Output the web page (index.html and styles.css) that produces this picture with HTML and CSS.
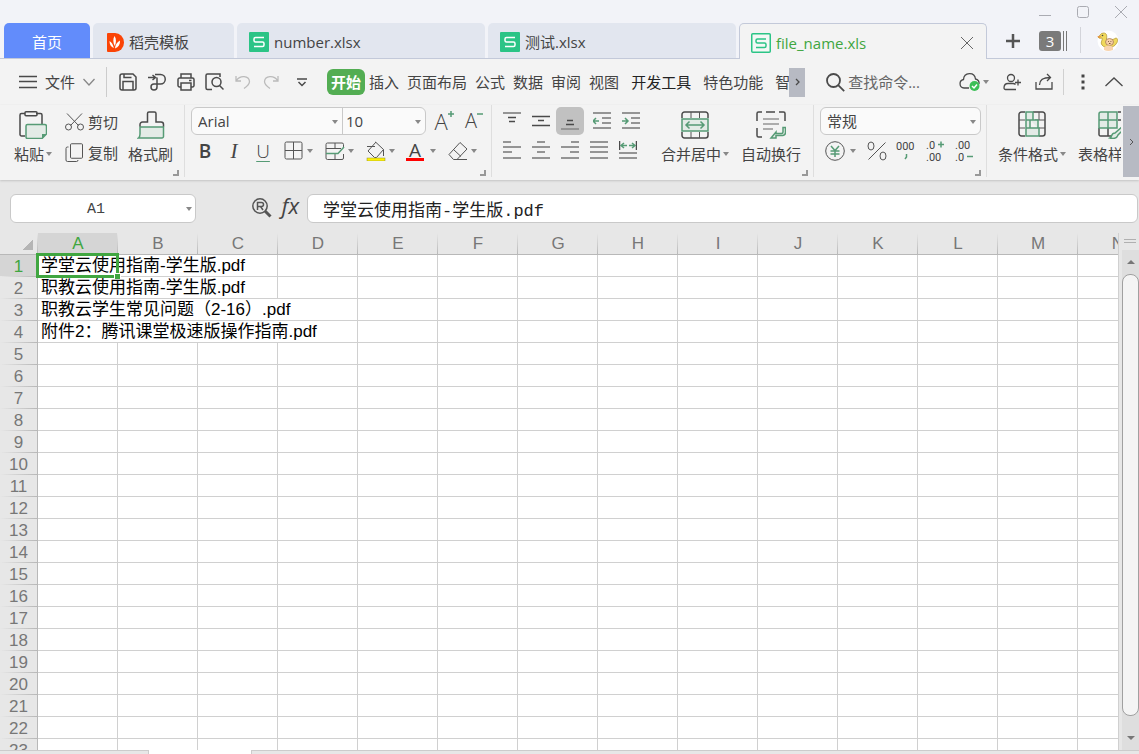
FILE: index.html
```html
<!DOCTYPE html>
<html lang="zh-CN">
<head>
<meta charset="utf-8">
<title>file_name.xls</title>
<link rel="stylesheet" href="styles.css">
</head>
<body>
<header class="titlebar">
  <div class="window-controls">
    <button aria-label="最小化"><svg width="14" height="14" viewBox="0 0 14 14"><path d="M1 10.5h12"/></svg></button>
    <button aria-label="最大化"><svg width="14" height="14" viewBox="0 0 14 14"><rect x="1.5" y="1.5" width="11" height="11" rx="2"/></svg></button>
    <button aria-label="关闭窗口"><svg width="14" height="14" viewBox="0 0 14 14"><path d="M1 1l12 12M13 1L1 13"/></svg></button>
  </div>
  <div class="tabstrip">
    <button class="tab tab-home">首页</button>
    <button class="tab tab-small"><svg class="flat" width="17" height="19" viewBox="0 0 17 19"><path d="M0 1a1 1 0 0 1 1-1h7a9 9.500 0 0 1 0 19H1a1 1 0 0 1-1-1z" fill="#fb4406"/><path d="M7.500 3c2 3 1.800 6.500.300 10C6 9.500 5.800 6 7.500 3zM2.500 8c2.300 1.400 3.600 3.500 4.400 7C4 14 2.500 11.500 2.500 8zM13 7.500c.300 4-1.500 6.500-5 8 .200-3.500 2-6.500 5-8z" fill="#fff"/></svg>稻壳模板</button>
    <button class="tab"><svg class="flat" width="20" height="20" viewBox="0 0 20 20"><rect width="20" height="20" rx="1" fill="#2bc486"/><path class="s-mark" d="M15 5.500H6.500a1.500 1.500 0 0 0-1.500 1.500v1.500A1.500 1.500 0 0 0 6.500 10h7a1.500 1.500 0 0 1 1.500 1.500V13a1.500 1.500 0 0 1-1.500 1.500H5"/></svg>number.xlsx</button>
    <button class="tab"><svg class="flat" width="20" height="20" viewBox="0 0 20 20"><rect width="20" height="20" rx="1" fill="#2bc486"/><path class="s-mark" d="M15 5.500H6.500a1.500 1.500 0 0 0-1.500 1.500v1.500A1.500 1.500 0 0 0 6.500 10h7a1.500 1.500 0 0 1 1.500 1.500V13a1.500 1.500 0 0 1-1.500 1.500H5"/></svg>测试.xlsx</button>
    <div class="tab tab-active"><svg width="20" height="20" viewBox="0 0 20 20"><rect x=".75" y=".75" width="18.500" height="18.500" rx="1" fill="#f4f8f5" stroke="#2bc486" stroke-width="1.500"/><path class="s-mark s-green" d="M15 6H6.500A1.500 1.500 0 0 0 5 7.500v1A1.500 1.500 0 0 0 6.500 10h7a1.500 1.500 0 0 1 1.500 1.500V13a1.500 1.500 0 0 1-1.500 1.500H5"/></svg><span>file_name.xls</span>
      <button class="tab-close" aria-label="关闭标签"><svg width="14" height="14" viewBox="0 0 14 14"><path d="M1 1l12 12M13 1L1 13"/></svg></button></div>
    <button class="new-tab" aria-label="新建标签"><svg width="16" height="16" viewBox="0 0 16 16"><path d="M1 8h14M8 1v14"/></svg></button>
    <button class="tab-count" aria-label="标签数量"><span>3</span><i></i><i></i></button>
    <span class="strip-divider"></span>
    <button class="avatar" aria-label="账户"><svg class="flat" width="22" height="22" viewBox="0 0 22 22"><circle cx="11" cy="11" r="10.500" fill="#fff"/><path d="M1 7c2-.500 2-4 5.500-4C10 3 10 6 9.500 9c2 2 6 1 9.500-1 2 0 2 4 0 6-2 4-11 5-14 1-2-3 1-5 0-7-1 0-3 1-4-1z" fill="#f0d95c" stroke="#b59b3a" stroke-width=".8"/><path d="M0 6.500l4-.500-1 2z" fill="#f08c3c"/><circle cx="5.500" cy="5.500" r=".8" fill="#444"/><ellipse cx="12.500" cy="12" rx="4" ry="3.500" fill="#f7cfa5" stroke="#a77b54" stroke-width=".8"/><path d="M11 11.500h.8M13.500 11.500h.8M12 13.500h1.500" stroke="#76503a"/><path d="M7 17q5-3 9 0v3q-5 2-9 0z" fill="#f8d4ae"/></svg></button>
  </div>
</header>

<nav class="menubar">
  <button class="file-menu"><svg width="18" height="14" viewBox="0 0 18 14"><path d="M0 1.500h18M0 6.500h18M0 12.500h18"/></svg>文件<svg class="grey" width="12" height="8" viewBox="0 0 12 8"><path d="M.500 1L6 7l5.500-6"/></svg></button>
  <div class="quick">
    <button aria-label="保存"><svg width="18" height="18" viewBox="0 0 18 18"><path class="w" d="M1 3a2 2 0 0 1 2-2h11l3 3v11a2 2 0 0 1-2 2H3a2 2 0 0 1-2-2zM4 17V8.500h10V17M5 1v3.500h7.500"/></svg></button>
    <button aria-label="输出"><svg width="18" height="18" viewBox="0 0 18 18"><path class="w" d="M0 4.500h7M4.500 2l3 2.500-3 2.500M7 1.500h5.500a4.500 4.500 0 0 1 0 9.500H6a3 3 0 1 0 3 3V4.500"/></svg></button>
    <button aria-label="打印"><svg width="18" height="18" viewBox="0 0 18 18"><path class="w" d="M4 5V1h10v4M4 14H2.500A1.500 1.500 0 0 1 1 12.500v-6A1.500 1.500 0 0 1 2.500 5h13A1.500 1.500 0 0 1 17 6.500v6a1.500 1.500 0 0 1-1.500 1.500H14M4 10h10v7H4zM12 7.500h2.500"/></svg></button>
    <button aria-label="打印预览"><svg width="19" height="18" viewBox="0 0 19 18"><path class="w" d="M7 16.500H2.500A1.500 1.500 0 0 1 1 15V2.500A1.500 1.500 0 0 1 2.500 1H15v3M14.500 12.500l4 4"/><circle class="w" cx="11.500" cy="9" r="4.500"/></svg></button>
    <button class="faint" aria-label="撤销"><svg width="16" height="16" viewBox="0 0 16 16"><path d="M1 2v5h5M1.500 6.500C5 1 14 1.500 14.500 7.500c0 3-2.500 5-5.500 7"/></svg></button>
    <button class="faint" aria-label="重做"><svg width="16" height="16" viewBox="0 0 16 16"><path d="M15 2v5h-5M14.500 6.500C11 1 2 1.500 1.500 7.500c0 3 2.500 5 5.500 7"/></svg></button>
    <button class="more" aria-label="自定义快速访问"><svg width="10" height="9" viewBox="0 0 10 9"><path class="w" d="M0 1h10M1.500 4L5 7.500 8.500 4"/></svg></button>
  </div>
  <div class="menus">
    <button class="current">开始</button><button>插入</button><button>页面布局</button><button>公式</button><button>数据</button><button>审阅</button><button>视图</button><button class="strong wide">开发工具</button><button class="wide">特色功能</button><button class="clipped">智</button>
  </div>
  <button class="scroll-menu" aria-label="更多菜单"><svg width="5" height="8" viewBox="0 0 5 8"><path d="M1 1l3 3-3 3"/></svg></button>
  <label class="search"><svg width="19" height="19" viewBox="0 0 19 19"><circle cx="7.500" cy="7.500" r="6.500"/><path d="M12.200 12.200l6 6"/></svg><input type="text" placeholder="查找命令..." aria-label="查找命令"></label>
  <div class="menu-actions">
    <button class="cloud" aria-label="云同步"><svg width="22" height="20" viewBox="0 0 22 20"><path d="M10 16H5a4.300 4.300 0 0 1-.500-8.500C5 0 15.500-.500 16.500 7c2.500.500 4 2.500 3.500 5"/><circle cx="15.500" cy="14" r="5" fill="#3cbf57" stroke="none"/><path d="M13 14l2 2 3-3.500" stroke="#fff" stroke-width="1.500"/></svg><i class="caret"></i></button>
    <button aria-label="协作"><svg width="18" height="18" viewBox="0 0 18 18"><circle cx="8" cy="5" r="3.500"/><path d="M13 16.500H2.500A1.500 1.500 0 0 1 1 15c0-3 2-4.500 4-4.500h5c1 0 2 .500 2.500 1M12 9.500h6M15 6.500v6"/></svg></button>
    <button aria-label="分享"><svg width="18" height="18" viewBox="0 0 18 18"><path d="M1 9v7h16V9M4.500 12c0-5 3-7.500 11-7.500M12 1l3.500 3.500L12 8"/></svg></button>
  </div>
  <div class="menu-end">
    <button aria-label="更多"><svg width="4" height="16" viewBox="0 0 4 16"><path class="dot" d="M.500.500h3v3h-3zM.500 6.500h3v3h-3zM.500 12.500h3v3h-3z"/></svg></button>
    <button aria-label="折叠功能区"><svg width="18" height="10" viewBox="0 0 18 10"><path d="M.500 9L9 1l8.500 8"/></svg></button>
  </div>
</nav>

<section class="ribbon" aria-label="开始">
  <div class="group g-clip">
    <button class="big"><svg width="28" height="28" viewBox="0 0 28 28"><path class="k" d="M6 2.500H2.500A1.500 1.500 0 0 0 1 4v19.500A1.500 1.500 0 0 0 2.500 25H6M17 2.500h4.500A1.500 1.500 0 0 1 23 4v9"/><rect class="k" x="6" y=".75" width="12" height="4" rx="1"/><path class="g" d="M8.500 13.500h17a2 2 0 0 1 2 2v7.500l-4.500 4.500H8.500a1.500 1.500 0 0 1-1.500-1.500V15a1.500 1.500 0 0 1 1.500-1.500z"/><path d="M27.500 23H23v4.500z" fill="#569b75" stroke="none"/></svg><span>粘贴<i class="caret"></i></span></button>
    <div class="stack">
      <button><svg width="19" height="18" viewBox="0 0 19 18"><path d="M2 .500l11.500 12M17 .500l-11.500 12"/><circle cx="3.500" cy="14" r="3"/><circle cx="15.500" cy="14" r="3"/></svg>剪切</button>
      <button><svg width="19" height="20" viewBox="0 0 19 20"><rect x="5.500" y=".75" width="12" height="14.500" rx="1"/><path d="M3.500 4H2.500A1.500 1.500 0 0 0 1 5.500V17a1.500 1.500 0 0 0 1.500 1.500h9A1.500 1.500 0 0 0 13 17"/></svg>复制</button>
    </div>
    <button class="big"><svg width="28" height="28" viewBox="0 0 28 28"><path class="g" d="M3 16h23.500v9.500a1.500 1.500 0 0 1-1.500 1.500H1.500Q3 26 3 23z"/><path class="k" d="M3 15.500v-2A2.500 2.500 0 0 1 5.500 11h5V2.500A1.500 1.500 0 0 1 12 1h5.500A1.500 1.500 0 0 1 19 2.500V11h5a2.500 2.500 0 0 1 2.500 2.500v2"/></svg><span>格式刷</span></button>
    <i class="corner"></i>
  </div>

  <div class="group g-font">
    <div class="row">
      <div class="combo">
        <span class="pick pick-font"><select aria-label="字体"><option>Arial</option></select><i class="caret"></i></span>
        <span class="pick pick-size"><select aria-label="字号"><option>10</option></select><i class="caret"></i></span>
      </div>
      <button class="grow" aria-label="增大字号"><span>A</span><svg width="6" height="6" viewBox="0 0 6 6"><path class="gl" d="M0 3h6M3 0v6"/></svg></button>
      <button class="grow" aria-label="减小字号"><span class="less">A</span><svg width="6" height="6" viewBox="0 0 6 6"><path class="gl" d="M0 3h6"/></svg></button>
    </div>
    <div class="row tools">
      <button class="letter bold">B</button>
      <button class="letter italic">I</button>
      <button class="letter under">U</button>
      <button class="drop"><svg width="20" height="20" viewBox="0 0 20 20"><path d="M2.500 1h14A1.500 1.500 0 0 1 18 2.500v14a1.500 1.500 0 0 1-1.500 1.500h-14A1.500 1.500 0 0 1 1 16.500v-14A1.500 1.500 0 0 1 2.500 1zM9.500 1v17M1 9.500h17"/></svg><i class="caret"></i></button>
      <button class="drop"><svg width="20" height="20" viewBox="0 0 20 20"><path d="M18.500 7V3.500A1.500 1.500 0 0 0 17 2H2.500A1.500 1.500 0 0 0 1 3.500V17a1.500 1.500 0 0 0 1.500 1.500H17a1.500 1.500 0 0 0 1.500-1.500v-4M1 7.500h15M10 2v6M10 13v5"/><path class="gl" d="M1 12.500h12l6-6.500"/></svg><i class="caret"></i></button>
      <button class="drop"><svg width="20" height="20" viewBox="0 0 20 20"><path d="M9.500 1l8 7.500-7 8H8.500L2 10 10 1M1 5.500h8M17.500 8.500V15"/><rect x="1" y="17" width="18" height="3" fill="#fff200" stroke="#8a8a3a" stroke-width=".5"/></svg><i class="caret"></i></button>
      <button class="drop color"><span>A</span><i class="caret"></i></button>
      <button class="drop"><svg width="20" height="20" viewBox="0 0 20 20"><path d="M12 1.500L19 8 9 18.500H5.500L1 13.500zM5.500 8.500l7.500 7M9 18.500h10"/></svg><i class="caret"></i></button>
    </div>
    <i class="corner"></i>
  </div>

  <div class="group g-align">
    <div class="align-tools">
      <div class="row">
        <button aria-label="顶端对齐"><svg width="18" height="18" viewBox="0 0 18 18"><path class="l" d="M0 1h18"/><path class="k" d="M5 5.500h8M6 9.500h6"/></svg></button>
        <button aria-label="垂直居中"><svg width="18" height="18" viewBox="0 0 18 18"><path class="k" d="M0 4.500h18M6 8.500h6M0 13.500h18"/></svg></button>
        <button class="pressed" aria-label="底端对齐"><svg width="18" height="18" viewBox="0 0 18 18"><path class="k" d="M6 8.500h6M5 12.500h8"/><path class="l" d="M0 17h18"/></svg></button>
        <button class="indent" aria-label="减少缩进"><svg width="18" height="18" viewBox="0 0 18 18"><path class="l" d="M0 1h18M9 6h9M9 11h9M0 16h18"/><path class="gl" d="M0 9h6M3 6L0 9l3 3"/></svg></button>
        <button aria-label="增加缩进"><svg width="18" height="18" viewBox="0 0 18 18"><path class="l" d="M0 1h18M9 6h9M9 11h9M0 16h18"/><path class="gl" d="M0 9h6M3 6l3 3-3 3"/></svg></button>
      </div>
      <div class="row">
        <button aria-label="左对齐"><svg width="18" height="18" viewBox="0 0 18 18"><path class="l" d="M0 1h8M0 6h18M0 11h9M0 17h18"/></svg></button>
        <button aria-label="水平居中"><svg width="18" height="18" viewBox="0 0 18 18"><path class="l" d="M5 1h8M0 6h18M5 11h8M0 17h18"/></svg></button>
        <button aria-label="右对齐"><svg width="18" height="18" viewBox="0 0 18 18"><path class="l" d="M10 1h8M0 6h18M9 11h9M0 17h18"/></svg></button>
        <button aria-label="两端对齐"><svg width="18" height="18" viewBox="0 0 18 18"><path class="l" d="M0 1h18M0 6h18M0 11h18M0 17h18"/></svg></button>
        <button aria-label="分散对齐"><svg width="18" height="18" viewBox="0 0 18 18"><path class="l" d="M0 12h18M0 17h18"/><path class="k" d="M.5 0v9M17.500 0v9"/><path class="gl" d="M2 4.500h6M5 2L2 4.500 5 7M16 4.500h-6M13 2l3 2.500L13 7"/></svg></button>
      </div>
    </div>
    <button class="big"><svg width="28" height="28" viewBox="0 0 28 28"><path class="k" d="M1 7V3.500A2.500 2.500 0 0 1 3.500 1h21A2.500 2.500 0 0 1 27 3.500V7M1 21v3.500A2.500 2.500 0 0 0 3.500 27h21a2.500 2.500 0 0 0 2.500-2.500V21"/><path d="M10 1v6M18.500 1v6M10 21v6M18.500 21v6"/><rect class="g" x="1" y="8" width="26" height="12"/><path class="gl" d="M5 14h18M8.500 10.500L5 14l3.500 3.500M19.500 10.500L23 14l-3.500 3.500"/></svg><span>合并居中<i class="caret"></i></span></button>
    <button class="big"><svg width="30" height="28" viewBox="0 0 30 28"><path class="k" d="M6 1H2.500A1.500 1.500 0 0 0 1 2.500V10M23 1h4.500A1.500 1.500 0 0 1 29 2.500V10M1 17v7.500A1.500 1.500 0 0 0 2.500 26H6M10 1h9"/><path class="l thin" d="M7 8h16M7 13h16M7 18h10"/><path class="g" d="M27 16.500h2.500v5a3 3 0 0 1-3 3H20v2.500h-5l5-6v1.500h5.500a1.500 1.500 0 0 0 1.500-1.500z"/></svg><span>自动换行</span></button>
    <i class="corner"></i>
  </div>

  <div class="group g-number">
    <div class="combo"><span class="pick pick-format"><select aria-label="数字格式"><option>常规</option></select><i class="caret"></i></span></div>
    <div class="row tools">
      <button class="drop yen"><svg width="20" height="20" viewBox="0 0 20 20"><circle cx="10" cy="10" r="9.300"/><path class="gl" d="M6 5l4 4.500L14 5M10 9.500V16M5.500 10h9M5.500 13h9"/></svg><i class="caret"></i></button>
      <button aria-label="百分比"><svg width="20" height="20" viewBox="0 0 20 20"><ellipse cx="4" cy="5" rx="3" ry="4"/><ellipse cx="16" cy="15" rx="3" ry="4"/><path d="M18.500 1.500l-17 17"/></svg></button>
      <button aria-label="千位分隔"><svg width="20" height="24" viewBox="0 0 20 24"><text x="0" y="11">000</text><path class="gl" d="M10.500 15v3l-1.500 2"/></svg></button>
      <button aria-label="增加小数位"><svg width="20" height="24" viewBox="0 0 20 24"><text x="1" y="10">.0</text><text x="1" y="22">.00</text><path class="gl" d="M13 5.500h6M16 2.500v6"/></svg></button>
      <button aria-label="减少小数位"><svg width="20" height="24" viewBox="0 0 20 24"><text x="1" y="10">.00</text><text x="1" y="22">.0</text><path class="gl" d="M13 17.500h6"/></svg></button>
    </div>
    <i class="corner"></i>
  </div>

  <div class="group g-style">
    <button class="big"><svg width="28" height="28" viewBox="0 0 28 28"><path class="k" d="M7 1H3.500A2.500 2.500 0 0 0 1 3.500v19A2.500 2.500 0 0 0 3.500 25H7M15 1h9.500A2.500 2.500 0 0 1 27 3.500v19a2.500 2.500 0 0 1-2.500 2.500H21"/><path d="M1 9h6M1 17h6M21 1v8M17 9h10M21 17h6"/><path class="g" d="M8 1h7v8h-3v8h9v8H8zM8 9h4M8 17h4M12 9h8v8"/></svg><span>条件格式<i class="caret"></i></span></button>
    <button class="big"><svg width="28" height="28" viewBox="0 0 28 28"><path class="k" d="M1 17v6.500A1.500 1.500 0 0 0 2.500 25H10v-8M20 1h4M20 9h5M10 25h3"/><path class="g" d="M3 1h16v16H1V3a2 2 0 0 1 2-2zM10 1v16M1 9h18"/><path class="g" d="M12 27c2-1 1-5 5-5l8-7v4l-5 5c-1 3-4 4-8 3z"/></svg><span>表格样式<i class="caret"></i></span></button>
  </div>
  <button class="scroll-ribbon" aria-label="更多工具"><svg width="5" height="8" viewBox="0 0 5 8"><path d="M1 1l3 3-3 3"/></svg></button>
</section>

<section class="formula">
  <span class="name-box"><input type="text" value="A1" aria-label="名称框"><i class="caret"></i></span>
  <div class="fx">
    <button aria-label="浏览公式"><svg width="20" height="20" viewBox="0 0 20 20"><circle cx="8" cy="8" r="7.200"/><path d="M5.500 12V4.500h4a2 2 0 0 1 0 4h-4M8.500 8.500l2.500 3.500"/><path d="M13 13l5.500 5.500" stroke-width="3"/></svg></button>
    <button class="fx-label">fx</button>
  </div>
  <input class="formula-input" type="text" value="学堂云使用指南-学生版.pdf" aria-label="编辑栏">
</section>

<main class="workspace">
  <div class="sheet"><table class="grid"><thead></thead><tbody></tbody></table></div>
  <div class="scrollbar">
    <div class="splitter"></div>
    <button aria-label="向上滚动"><i class="arrow up"></i></button>
    <div class="thumb"></div>
    <button class="down" aria-label="向下滚动"><i class="arrow"></i></button>
  </div>
</main>
<footer class="sheet-tabs"><div class="sheet-nav"></div><div class="sheet-current"></div><div class="sheet-rest"></div></footer>
<script src="sheet.js"></script>
</body>
</html>
```

FILE: styles.css
```css
* { box-sizing: border-box; }

html, body { height: 100%; }

body {
  margin: 0;
  display: flex;
  flex-direction: column;
  overflow: hidden;
  background: #e7e7e7;
  color: #444;
  font: 15px/20px "Open Sans", "Noto Sans CJK SC", sans-serif;
}

button {
  border: 0;
  padding: 0;
  background: none;
  color: inherit;
  font: inherit;
  white-space: nowrap;
  display: flex;
  align-items: center;
  justify-content: center;
  flex: none;
}

input, select {
  border: 0;
  padding: 0;
  margin: 0;
  background: none;
  color: inherit;
  font: inherit;
  outline: 0;
  min-width: 0;
}

select { appearance: none; }

svg { display: block; flex: none; fill: none; stroke: #555; }
svg.flat { stroke: none; }
svg .w { stroke-width: 1.5; }
svg .k { stroke: #4a4a4a; stroke-width: 1.5; }
svg .l { stroke: #959595; stroke-width: 2; }
svg .thin { stroke-width: 1.5; }
svg .g { stroke: #569b75; stroke-width: 1.5; fill: #e3ebe6; }
svg .gl { stroke: #569b75; stroke-width: 1.5; }
svg .dot { fill: #444; stroke: none; }
svg .s-mark { stroke: #fff; stroke-width: 1.5; }
svg .s-green { stroke: #2bc486; }
svg text { font: 11px "Roboto", sans-serif; fill: #444; stroke: none; }

.caret {
  width: 0;
  height: 0;
  border: 3px solid transparent;
  border-top: 4px solid #888;
  border-bottom: 0;
  flex: none;
}

/* Title bar */
.titlebar { flex: none; background: #f2f3f8; }

.window-controls {
  height: 23px;
  display: flex;
  justify-content: flex-end;
  gap: 24px;
  padding-right: 11px;
}
.window-controls svg { stroke: #aaabb2; }

.tabstrip {
  height: 36px;
  display: flex;
  gap: 3px;
  padding-left: 4px;
  box-shadow: inset 0 -1px #c3c9d9;
}

.tab {
  flex: 0 1 248px;
  height: 35px;
  padding: 3px 12px 0;
  gap: 5px;
  display: flex;
  align-items: center;
  justify-content: flex-start;
  border-radius: 5px 5px 0 0;
  background: #e2e6ef;
}
.tab-home { flex-basis: 86px; justify-content: center; background: #628cfb; color: #fff; }
.tab-small { flex-basis: 141px; padding-left: 14px; }
.tab-active {
  height: 36px;
  border: 1px solid #c3c9d9;
  border-bottom: 0;
  background: #f3f3f3;
  color: #40a640;
  padding-left: 11px;
}
.tab-close { margin-left: auto; }
.tab-close svg { stroke: #666; }
.new-tab { width: 46px; }
.new-tab svg { stroke-width: 2.5; }
.tab-count { gap: 1px; }
.tab-count span {
  width: 22px;
  height: 20px;
  border-radius: 3px;
  background: #7a7a7a;
  color: #fff;
  line-height: 20px;
}
.tab-count i { width: 2px; height: 20px; border-right: 1px solid #777; }
.strip-divider { width: 1px; height: 26px; margin: 4px 11px 0 10px; background: #d3d4da; }
.avatar { width: 26px; }

/* Menu bar */
.menubar {
  flex: none;
  height: 46px;
  display: flex;
  align-items: center;
  background: #f3f3f3;
}
.menubar svg { stroke: #4a4a4a; stroke-width: 1.3; }
.file-menu { height: 30px; padding: 0 11px 0 19px; gap: 8px; border-right: 1px solid #ccc; }
.menubar .grey { stroke: #888; }
.quick { display: flex; padding-left: 6px; }
.quick button { width: 29px; }
.quick .faint { width: 28px; }
.menubar .faint svg { stroke: #bbb; }
.quick .more { width: 33px; margin-right: 9px; }
.menus { display: flex; gap: 8px; min-width: 0; overflow: hidden; }
.menus button { height: 26px; }
.menus .current {
  padding: 0 4px;
  margin-right: -4px;
  border-radius: 6px;
  background: #53ad53;
  color: #fff;
  font-weight: 700;
}
.menus .wide { margin-left: 4px; }
.menus .strong { color: #222; }
.menus .clipped { flex: none; width: 14px; margin-left: 4px; overflow: hidden; justify-content: flex-start; }
.scroll-menu { width: 16px; height: 29px; background: #b7bac3; }
.search { display: flex; align-items: center; gap: 3px; margin-left: 21px; flex: 0 1 130px; min-width: 60px; }
.search svg { stroke-width: 1.8; }
.search input { flex: 1; width: 60px; }
.search input::placeholder { color: #666; opacity: 1; }
.menu-actions { margin-left: auto; display: flex; gap: 14px; height: 26px; padding-right: 10px; border-right: 1px solid #d0d0d0; }
.menu-actions .cloud { gap: 2px; }
.menu-end { display: flex; gap: 20px; padding: 0 16px 0 17px; }

/* Ribbon */
.ribbon {
  flex: none;
  height: 75px;
  display: flex;
  align-items: flex-start;
  background: #f3f3f3;
  box-shadow: 0 1px 2px #c4c4c4;
}
.group {
  position: relative;
  height: 72px;
  flex: none;
  border-right: 1px solid #dedede;
  padding-top: 2px;
}
.row { display: flex; align-items: center; height: 28px; gap: 1px; }
.big {
  flex-direction: column;
  justify-content: flex-start;
  gap: 5px;
  padding-top: 4px;
}
.big span { display: flex; align-items: center; gap: 2px; height: 20px; }
.corner {
  position: absolute;
  right: 5px;
  bottom: 1px;
  width: 6px;
  height: 6px;
  border: solid #999;
  border-width: 0 2px 2px 0;
}
.g-clip { display: flex; gap: 10px; padding-left: 14px; padding-right: 11px; }
.stack { display: flex; flex-direction: column; gap: 2px; margin-left: 3px; }
.stack button { height: 29px; gap: 4px; }

.g-font { padding-left: 6px; padding-right: 6px; width: 307px; }
.g-font .row { justify-content: flex-start; }
.combo {
  display: inline-flex;
  height: 28px;
  border: 1px solid #c9c9c9;
  border-radius: 6px;
  background: #fafafa;
}
.pick { position: relative; display: flex; }
.pick select { width: 100%; padding-left: 6px; }
.pick .caret { position: absolute; right: 4px; top: 12px; }
.pick-font { width: 151px; border-right: 1px solid #c9c9c9; }
.pick-size { width: 82px; }
.pick-size select { padding-left: 3px; }
.pick-format { width: 159px; }
.grow { width: 29px; align-items: flex-start; padding-left: 5px; }
.grow span { font: 300 22px/26px "Open Sans", sans-serif; }
.grow .less { font-size: 20px; }
.grow svg { margin-top: 3px; }

.tools { margin-top: 2px; }
.letter { width: 28px; font-size: 19px; line-height: 28px; }
.letter.bold { font-weight: 600; }
.letter.italic { font-family: "Liberation Serif", serif; font-style: italic; font-size: 21px; }
.letter.under {
  line-height: 20px;
  font-weight: 300;
  text-decoration: underline;
  text-decoration-color: #569b75;
  text-underline-offset: 3px;
}
.drop { width: 40px; gap: 3px; }
.drop.color span { width: 18px; height: 19px; border-bottom: 3px solid #f00; font-size: 19px; line-height: 16px; }
.color { gap: 6px; }

.g-align { display: flex; padding: 2px 10px 0 6px; width: 322px; }
.align-tools { display: flex; flex-direction: column; gap: 1px; margin-right: 16px; }
.align-tools .row button { width: 28px; height: 28px; }
.align-tools .pressed { border-radius: 5px; background: #c1c1c1; }
.align-tools .indent { margin-left: 3px; }
.g-align .big + .big { margin-left: 12px; }

.g-number { padding: 2px 5px 0 6px; width: 173px; }
.g-number .row { gap: 9px; }
.g-number .row .yen { width: 35px; margin-left: 3px; gap: 5px; }

.g-style { display: flex; gap: 12px; padding-left: 11px; flex: 1 1 0; min-width: 0; overflow: hidden; border: 0; margin-right: 2px; }
.scroll-ribbon { width: 16px; height: 71px; margin-top: 1px; background: #b7bac3; }

/* Formula bar */
.formula {
  flex: none;
  display: flex;
  padding: 14px 0 10px 10px;
}
.name-box {
  position: relative;
  width: 186px;
  height: 29px;
  border: 1px solid #c9c9c9;
  border-radius: 6px;
  background: #fff;
  display: flex;
  padding: 2px 14px 0 0;
}
.name-box input { width: 100%; text-align: center; font-family: "Liberation Mono", monospace; }
.name-box .caret { position: absolute; right: 3px; top: 12px; }
.fx { display: flex; width: 111px; gap: 10px; justify-content: flex-end; padding-right: 8px; }
.fx button { height: 27px; }
.fx svg { stroke-width: 1.5; }
.fx-label { font: italic 22px/24px "Open Sans", sans-serif; padding-bottom: 5px; }
.formula-input {
  flex: 1;
  height: 29px;
  margin-right: 1px;
  border: 1px solid #c9c9c9;
  border-radius: 6px;
  background: #fff;
  padding-left: 15px;
  font: 17px/24px "Liberation Mono", "Noto Sans CJK SC", monospace;
  color: #222;
}

/* Grid */
.workspace { flex: 1; min-height: 0; display: flex; }
.sheet { flex: 1; min-width: 0; overflow: hidden; background: #fff; border-right: 1px solid #d0d0d0; }
.grid {
  table-layout: fixed;
  width: 2118px;
  border-spacing: 0;
  font: 17px/20px "Liberation Sans", "Noto Sans CJK SC", sans-serif;
}
.grid th, .grid td { height: 22px; padding: 0; border: 0 solid #d0d0d0; white-space: nowrap; line-height: 21px; }
.grid td { border-width: 0 1px 1px 0; padding-left: 3px; color: #000; position: relative; }
.grid th { font-weight: 400; color: #777; background: #e7e7e7; }
.grid thead th {
  width: 80px;
  border-bottom: 1px solid #b8b8b8;
  background: linear-gradient(#e7e7e7, #b8b8b8) right / 1px 100% no-repeat #e7e7e7;
}
.grid tbody th {
  border-right: 1px solid #b8b8b8;
  background: linear-gradient(90deg, #e7e7e7, #b8b8b8) bottom / 100% 1px no-repeat #e7e7e7;
}
.grid thead .select-all { width: 38px; }
.select-all button {
  width: 100%;
  height: 21px;
  background: linear-gradient(135deg, transparent 50%, #b5b5b5 50%) 22px 6px / 11px 11px no-repeat;
}
.grid th.selected { color: #40a640; background-color: #d5d5d5; }
.selection {
  position: absolute;
  left: -2px;
  top: -2px;
  width: 83px;
  height: 25px;
  border: 3px solid #40a640;
}
.selection::after {
  content: "";
  position: absolute;
  right: -4px;
  bottom: -4px;
  width: 5px;
  height: 5px;
  background: #40a640;
  outline: 1px solid #fff;
}

.scrollbar { flex: none; width: 17px; margin-left: 3px; display: flex; flex-direction: column; background: #dedede; }
.splitter {
  height: 17px;
  background: linear-gradient(#b0b0b0 1px, transparent 1px 3px, #b0b0b0 3px) 2px 6px / 12px 4px no-repeat #e7e7e7;
}
.scrollbar button { height: 24px; }
.scrollbar .down { height: 24px; margin-top: 10px; }
.arrow { border: 4px solid transparent; border-top-color: #777; border-bottom: 0; }
.arrow.up { transform: rotate(180deg); }
.thumb { flex: 1; border: 1px solid #a0a0a0; border-radius: 8px; background: #f4f4f4; }

.sheet-tabs { flex: none; height: 4px; display: flex; }
.sheet-tabs div { border-top: 1px solid #ccc; }
.sheet-nav { width: 149px; border-right: 1px solid #ccc; }
.sheet-tabs .sheet-current { width: 102px; background: #fff; border-top: 0; }
.sheet-rest { flex: 1; border-left: 1px solid #ccc; }
```

FILE: sheet.js
```js
const COLUMNS = 26;
const ROWS = 60;

// Text that overflows its cell covers the neighbours it runs over.
const entries = {
  1: { text: "学堂云使用指南-学生版.pdf", span: 3 },
  2: { text: "职教云使用指南-学生版.pdf", span: 3 },
  3: { text: "职教云学生常见问题（2-16）.pdf", span: 4 },
  4: { text: "附件2：腾讯课堂极速版操作指南.pdf", span: 4 }
};

let head = '<tr><th class="select-all"><button aria-label="全选"></button></th>';
for (let c = 0; c < COLUMNS; c++) {
  const cls = c === 0 ? ' class="selected"' : "";
  head += `<th scope="col"${cls}>${String.fromCharCode(65 + c)}</th>`;
}
document.querySelector(".grid thead").innerHTML = head + "</tr>";

let body = "";
for (let r = 1; r <= ROWS; r++) {
  const entry = entries[r];
  const cls = r === 1 ? ' class="selected"' : "";
  body += `<tr><th scope="row"${cls}>${r}</th>`;
  let c = 0;
  if (entry) {
    const mark = r === 1 ? '<div class="selection"></div>' : "";
    body += `<td colspan="${entry.span}">${entry.text}${mark}</td>`;
    c = entry.span;
  }
  body += "<td></td>".repeat(COLUMNS - c) + "</tr>";
}
document.querySelector(".grid tbody").innerHTML = body;
```
